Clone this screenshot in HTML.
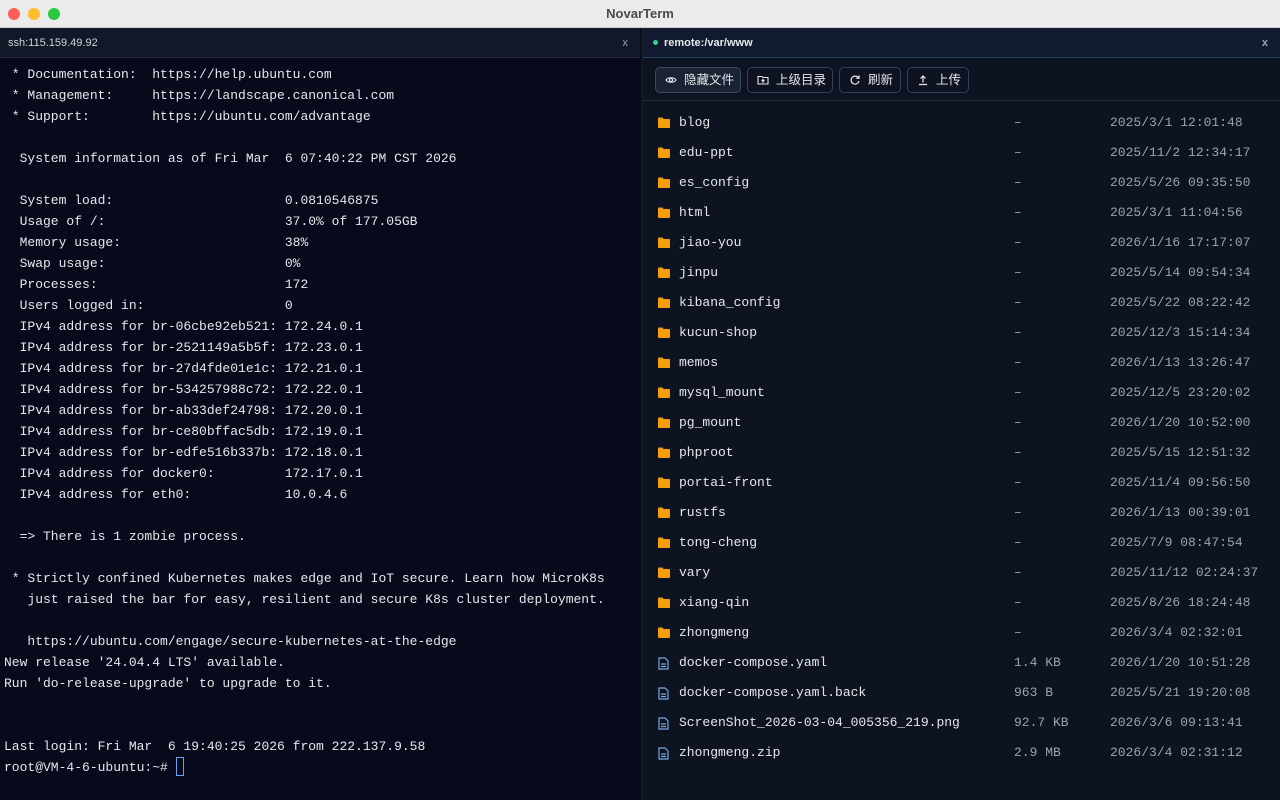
<!DOCTYPE html>
<html><head><meta charset="utf-8"><style>
*{margin:0;padding:0;box-sizing:border-box}
body{width:1280px;height:800px;background:#0b0f1a;overflow:hidden;font-family:"Liberation Sans","Noto Sans CJK SC",sans-serif;position:relative}
.title{position:absolute;left:0;top:0;width:1280px;height:28px;background:#ebebeb;border-bottom:1px solid #cfcfcf;text-align:center;line-height:28px;font-size:13px;font-weight:bold;color:#4a4a4a}
.dot{position:absolute;top:8px;width:12px;height:12px;border-radius:50%}
.left{position:absolute;left:0;top:28px;width:640px;height:772px;background:#060a1a}
.lh{height:30px;background:#111827;border-bottom:1px solid #1f2937;color:#d1d5db;font-size:11px;line-height:30px;padding-left:8px;position:relative}
.x{position:absolute;right:12px;top:0;color:#9ca3af;font-size:11px}
pre{position:absolute;left:4px;top:36px;font-family:"Liberation Mono",monospace;font-size:13px;line-height:21px;color:#e5e7eb}
.cur{display:inline-block;width:8px;height:19px;border:1px solid #60a5fa;vertical-align:-5px}
.right{position:absolute;left:642px;top:28px;width:638px;height:772px;background:#0d1320;border-left:1px solid #1a2233}
.rh{height:30px;background:#111a2e;border-bottom:1px solid #24405e;color:#e5e7eb;font-size:11px;font-weight:bold;line-height:30px;padding-left:21px;position:relative}
.g{position:absolute;left:10px;top:12px;width:5px;height:5px;border-radius:50%;background:#34d399}
.tb{height:43px;border-bottom:1px solid #1f2937;position:relative}
.btn{position:absolute;top:9px;height:26px;border:1px solid #334155;border-radius:5px;color:#e5e7eb;font-size:12.5px;line-height:24px;padding-left:28px}
.btn svg{position:absolute;left:9px;top:6px}
.row{position:absolute;left:0;height:30px;width:638px;font-family:"Liberation Mono",monospace;font-size:13px;line-height:30px;color:#e5e7eb}
.row .n{position:absolute;left:36px}
.row .s{position:absolute;left:371px;color:#9ca3af}
.row .d{position:absolute;left:467px;color:#9ca3af}
.row svg{position:absolute;left:15px;top:9px}
</style></head><body>
<div class="title">NovarTerm
<span class="dot" style="left:8px;background:#fe5f57"></span><span class="dot" style="left:28px;background:#febc2e"></span><span class="dot" style="left:48px;background:#28c840"></span></div>
<div class="left"><div class="lh">ssh:115.159.49.92<span class="x">x</span></div>
<pre> * Documentation:  https://help.ubuntu.com
 * Management:     https://landscape.canonical.com
 * Support:        https://ubuntu.com/advantage

  System information as of Fri Mar  6 07:40:22 PM CST 2026

  System load:                      0.0810546875
  Usage of /:                       37.0% of 177.05GB
  Memory usage:                     38%
  Swap usage:                       0%
  Processes:                        172
  Users logged in:                  0
  IPv4 address for br-06cbe92eb521: 172.24.0.1
  IPv4 address for br-2521149a5b5f: 172.23.0.1
  IPv4 address for br-27d4fde01e1c: 172.21.0.1
  IPv4 address for br-534257988c72: 172.22.0.1
  IPv4 address for br-ab33def24798: 172.20.0.1
  IPv4 address for br-ce80bffac5db: 172.19.0.1
  IPv4 address for br-edfe516b337b: 172.18.0.1
  IPv4 address for docker0:         172.17.0.1
  IPv4 address for eth0:            10.0.4.6

  => There is 1 zombie process.

 * Strictly confined Kubernetes makes edge and IoT secure. Learn how MicroK8s
   just raised the bar for easy, resilient and secure K8s cluster deployment.

   https://ubuntu.com/engage/secure-kubernetes-at-the-edge
New release '24.04.4 LTS' available.
Run 'do-release-upgrade' to upgrade to it.


Last login: Fri Mar  6 19:40:25 2026 from 222.137.9.58
root@VM-4-6-ubuntu:~# <span class="cur"></span></pre></div>
<div class="right"><div class="rh"><span class="g"></span>remote:/var/www<span class="x">x</span></div>
<div class="tb">
<div class="btn" style="left:12px;width:86px;background:#1a2334;border-color:#3b4a60"><svg width="12" height="12" viewBox="0 0 12 12" fill="none" stroke="#e5e7eb" stroke-width="1.1"><path d="M1 6C2.5 3 9.5 3 11 6 9.5 9 2.5 9 1 6Z"/><circle cx="6" cy="6" r="1.5"/></svg>隐藏文件</div>
<div class="btn" style="left:104px;width:86px"><svg width="12" height="12" viewBox="0 0 12 12" fill="none" stroke="#e5e7eb" stroke-width="1.1"><path d="M1 2.5H5L6 3.5H11V10H1Z"/><path d="M6 9V5.5M4.5 7L6 5.5 7.5 7"/></svg>上级目录</div>
<div class="btn" style="left:196px;width:62px"><svg width="12" height="12" viewBox="0 0 12 12" fill="none" stroke="#e5e7eb" stroke-width="1.2"><path d="M9.5 4A4 4 0 1 0 10 7"/><path d="M10 1.5V4.3H7.3"/></svg>刷新</div>
<div class="btn" style="left:264px;width:62px"><svg width="12" height="12" viewBox="0 0 12 12" fill="none" stroke="#e5e7eb" stroke-width="1.2"><path d="M2 10.5H10M6 8.5V2M3.5 4.5L6 2 8.5 4.5"/></svg>上传</div>
</div>
<div id="rows"></div>
</div>
<script>
var f=[["blog","—","2025/3/1 12:01:48"],["edu-ppt","—","2025/11/2 12:34:17"],["es_config","—","2025/5/26 09:35:50"],["html","—","2025/3/1 11:04:56"],["jiao-you","—","2026/1/16 17:17:07"],["jinpu","—","2025/5/14 09:54:34"],["kibana_config","—","2025/5/22 08:22:42"],["kucun-shop","—","2025/12/3 15:14:34"],["memos","—","2026/1/13 13:26:47"],["mysql_mount","—","2025/12/5 23:20:02"],["pg_mount","—","2026/1/20 10:52:00"],["phproot","—","2025/5/15 12:51:32"],["portai-front","—","2025/11/4 09:56:50"],["rustfs","—","2026/1/13 00:39:01"],["tong-cheng","—","2025/7/9 08:47:54"],["vary","—","2025/11/12 02:24:37"],["xiang-qin","—","2025/8/26 18:24:48"],["zhongmeng","—","2026/3/4 02:32:01"],["docker-compose.yaml","1.4 KB","2026/1/20 10:51:28",1],["docker-compose.yaml.back","963 B","2025/5/21 19:20:08",1],["ScreenShot_2026-03-04_005356_219.png","92.7 KB","2026/3/6 09:13:41",1],["zhongmeng.zip","2.9 MB","2026/3/4 02:31:12",1]];
var h="";f.forEach(function(r,i){var ic=r[3]?'<svg width="11" height="13" viewBox="0 0 11 13" fill="none" stroke="#7aa7e0" stroke-width="1.2"><path d="M1 1H7L10 4V12H1Z"/><path d="M3 7H8M3 9.5H8"/></svg>':'<svg width="12" height="11" viewBox="0 0 12 11"><path d="M0 1.5Q0 0.5 1 0.5H4.5L5.5 2H11Q12 2 12 3V10Q12 11 11 11H1Q0 11 0 10Z" fill="#f59e0b"/></svg>';
h+='<div class="row" style="top:'+(80+i*30)+'px">'+ic+'<span class="n">'+r[0]+'</span><span class="s">'+(r[1]=="—"?"–":r[1])+'</span><span class="d">'+r[2]+'</span></div>';});
document.getElementById("rows").innerHTML=h;
</script>
</body></html>
